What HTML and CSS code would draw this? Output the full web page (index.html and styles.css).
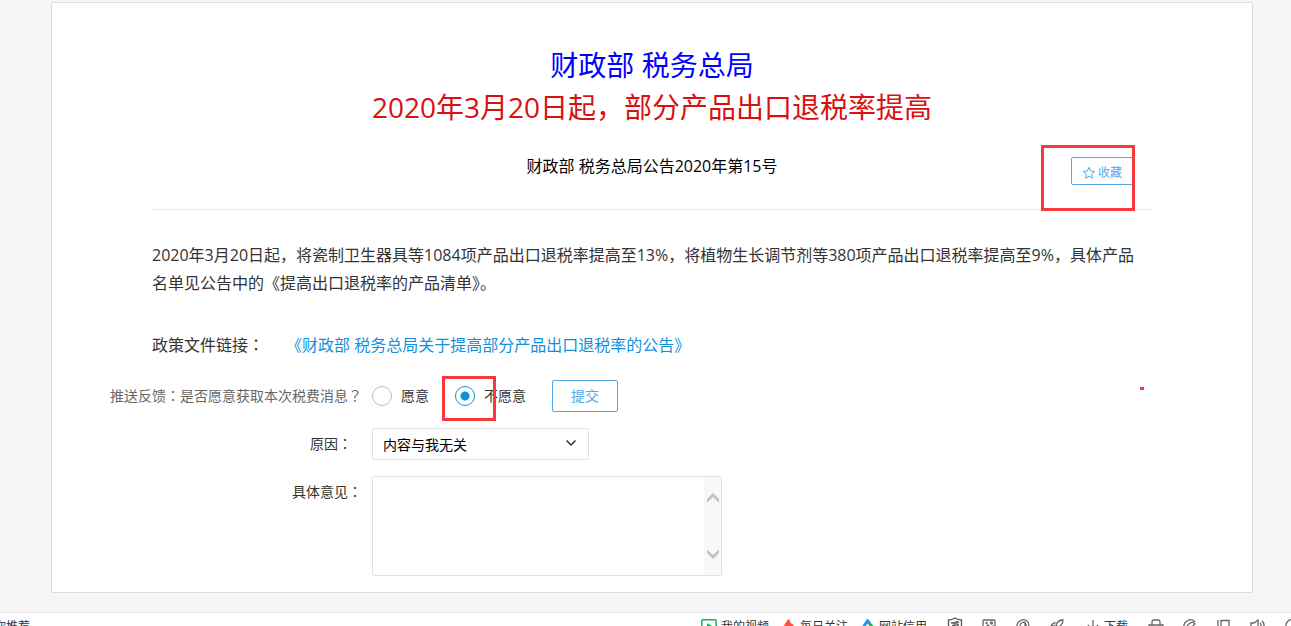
FILE: index.html
```html
<!DOCTYPE html>
<html lang="zh-CN">
<head>
<meta charset="utf-8">
<title>2020年3月20日起，部分产品出口退税率提高</title>
<link rel="stylesheet" href="styles.css">
</head>
<body>
<main class="card">
  <article class="article">
    <header class="article-head">
      <h1 class="title"><span class="title-org">财政部 税务总局</span><span class="title-main">2020年3月20日起，部分产品出口退税率提高</span></h1>
      <div class="subline">
        <p class="subtitle">财政部 税务总局公告2020年第15号</p>
        <div class="fav-wrap">
          <button class="btn fav" type="button">
            <svg width="14" height="14" viewBox="0 0 14 14" fill="none" stroke="currentColor" stroke-linejoin="round"><path d="M7 1.3l1.7 3.7 4 .5-3 2.7.8 4L7 10.2l-3.500 2 .8-4-3-2.700 4-.5z"/></svg>收藏</button>
          <span class="mark mark-fav"></span>
        </div>
      </div>
    </header>
    <p class="summary">2020年3月20日起，将瓷制卫生器具等1084项产品出口退税率提高至13%，将植物生长调节剂等380项产品出口退税率提高至9%，具体产品名单见公告中的《提高出口退税率的产品清单》。</p>
    <p class="policy"><span>政策文件链接<span class="colon" lang="ja">：</span></span><a href="#">《财政部 税务总局关于提高部分产品出口退税率的公告》</a></p>
  </article>
  <form class="feedback">
    <span class="question" id="q">推送反馈<span class="colon" lang="ja">：</span>是否愿意获取本次税费消息<span class="colon" lang="ja">？</span></span>
    <div class="answers" role="radiogroup" aria-labelledby="q">
      <label class="choice"><input type="radio" name="want" value="yes">愿意</label>
      <label class="choice"><input type="radio" name="want" value="no" checked>不愿意<span class="mark mark-radio"></span></label>
      <button class="btn submit" type="button">提交</button>
    </div>
    <label class="reason-label" for="reason">原因<span class="colon" lang="ja">：</span></label>
    <div class="select-wrap">
      <select id="reason"><option>内容与我无关</option></select>
      <svg class="caret" width="12" height="8" viewBox="0 0 12 8" fill="none" stroke="#333" stroke-width="1.500"><path d="M1.500 1.500L6 6l4.500-4.500"/></svg>
    </div>
    <label class="opinion-label" for="opinion">具体意见<span class="colon" lang="ja">：</span></label>
    <div class="opinion">
      <textarea id="opinion"></textarea>
      <div class="rail">
        <svg width="12" height="10" viewBox="0 0 12 10"><path d="M0 6l6-6 6 6v3.500L6 4 0 9.500z" fill="#c1c1c1"/></svg>
        <svg width="12" height="10" viewBox="0 0 12 10"><path d="M0 4l6 6 6-6V.5L6 6 0 .5z" fill="#c1c1c1"/></svg>
      </div>
    </div>
  </form>
  <span class="speck"></span>
</main>
<footer class="statusbar">
  <span class="recommend">为你推荐</span>
  <nav class="tools">
    <a class="tool named" href="#"><svg width="16" height="14" viewBox="0 0 16 14" fill="none" stroke="#1aaf5d" stroke-width="1.500"><rect x=".8" y=".8" width="14.400" height="12.400" rx="1"/><path d="M6 4l5 3-5 3z" fill="#1aaf5d" stroke="none"/></svg>我的视频</a>
    <a class="tool named focus" href="#"><svg width="14" height="14" viewBox="0 0 14 14"><path d="M1 8L5.500 1q1-1.500 2 0l1.500 4 1-1 3 5v5H1z" fill="#fa5147"/></svg>每日关注</a>
    <a class="tool named credit" href="#"><svg width="14" height="14" viewBox="0 0 14 14" fill="none" stroke-width="3"><path d="M6 1.500L13 10" stroke="#20b95b"/><path d="M1 10l5.500-8 2 2" stroke="#2196f3"/></svg>网站信用</a>
    <a class="tool" href="#" aria-label="安全"><svg width="16" height="16" viewBox="0 0 16 16" fill="none" stroke="#555" stroke-width="1.300"><path d="M8 1q3 2 6.500 2v5q0 5-6.500 7-6.500-2-6.500-7V3Q5 3 8 1z"/><path d="M4 6h3l2-1h3M5 8.500h3V6M10 5v3h2"/></svg></a>
    <a class="tool" href="#" aria-label="截图"><svg width="16" height="16" viewBox="0 0 16 16" fill="none" stroke="#666" stroke-width="1.300"><rect x="2" y="3" width="12" height="11" rx="1"/><path d="M3 12l4-4 3 3 2-2 2 2"/><circle cx="5.500" cy="6" r=".5"/><circle cx="10.500" cy="6" r="1"/></svg></a>
    <a class="tool" href="#" aria-label="浏览"><svg width="16" height="16" viewBox="0 0 16 16" fill="none" stroke="#666" stroke-width="1.200"><path d="M3 13Q0 7 5 4q5-3 8 1 2 4-1 8"/><path d="M5 10q0-5 5-5v7M8 5q4 1 3 6"/></svg></a>
    <a class="tool" href="#" aria-label="加速"><svg width="16" height="16" viewBox="0 0 16 16" fill="none" stroke="#666" stroke-width="1.300"><path d="M14 3Q9 3 7 8l2 2q5-2 5-7zM7 6Q4 5 2 9h4M9 10l1 4"/></svg></a>
    <a class="tool named download" href="#"><svg width="14" height="14" viewBox="0 0 14 14" fill="none" stroke="#666" stroke-width="1.300"><path d="M7 1v11M2 6l5 6 5-6"/></svg>下载</a>
    <a class="tool" href="#" aria-label="打印"><svg width="16" height="16" viewBox="0 0 16 16" fill="none" stroke="#666" stroke-width="1.300"><path d="M4 8V5q0-2 2-2h4q2 0 2 2v3M1 8h14v5H1z"/></svg></a>
    <a class="tool" href="#" aria-label="清理"><svg width="16" height="16" viewBox="0 0 16 16" fill="none" stroke="#666" stroke-width="1.200"><path d="M3 13Q0 7 5 4q5-3 8 1M4 11q2-5 7-6l2 2-7 6"/></svg></a>
    <a class="tool" href="#" aria-label="窗口"><svg width="16" height="16" viewBox="0 0 16 16" fill="none" stroke="#666" stroke-width="1.300"><path d="M5 3.500h8v9H5zM2 3v8"/></svg></a>
    <a class="tool" href="#" aria-label="声音"><svg width="16" height="16" viewBox="0 0 16 16" fill="none" stroke="#666" stroke-width="1.300"><path d="M1 6h3l4-3v11l-4-3H1zM10 6q2 2 0 5M12 4q4 4 0 9"/></svg></a>
    <a class="tool" href="#" aria-label="缩放"><svg width="16" height="16" viewBox="0 0 16 16" fill="none" stroke="#666" stroke-width="1.300"><circle cx="8" cy="8.500" r="6"/></svg></a>
  </nav>
</footer>
</body>
</html>
```
FILE: styles.css
```css
* { box-sizing: border-box; }

body {
  margin: 0;
  height: 100vh;
  overflow: hidden;
  background: #f5f5f5;
  color: #333;
  font: 14px/20px "Open Sans", "Noto Sans CJK SC", sans-serif;
}

h1, p { margin: 0; font-weight: 400; }
a { text-decoration: none; }
button, select, textarea { font: inherit; }

/* full-width punctuation centred in its em box */
.colon {
  font-family: "Noto Sans CJK JP", sans-serif;
  line-height: 1;
}

.card {
  position: relative;
  margin: 2px 38px 0 51px;
  padding-bottom: 16px;
  background: #fff;
  border: 1px solid #ddd;
}

.article { padding: 41px 100px 0; }

.article-head {
  padding-bottom: 24px;
  border-bottom: 1px solid #e8e8e8;
}

.title {
  font-size: 28px;
  line-height: 42px;
  text-align: center;
}
.title span { display: block; }
.title-org { color: #00f; }
.title-main { color: #d91010; }

.subline {
  display: grid;
  grid-template-columns: 1fr auto 1fr;
  align-items: start;
  margin-top: 28px;
}
.subtitle {
  grid-column: 2;
  color: #000;
  font-size: 16px;
}

.fav-wrap {
  position: relative;
  justify-self: end;
  margin: 1px 19px 0 0;
}

.btn {
  display: flex;
  align-items: center;
  justify-content: center;
  padding: 0;
  background: #fff;
  border: 1px solid #53a8ea;
  border-radius: 2px;
  color: #53a8ea;
}
.fav {
  gap: 2px;
  width: 62px;
  height: 28px;
  padding-top: 3px;
  font-size: 12px;
}
.submit {
  width: 66px;
  height: 32px;
}

.mark {
  position: absolute;
  border: 3px solid #f8383b;
  pointer-events: none;
}
.mark-fav { inset: -12px -2px -26px -30px; }
.mark-radio {
  left: -13px;
  top: -10px;
  width: 54px;
  height: 45px;
}
.speck {
  position: absolute;
  right: 108px;
  top: 384px;
  width: 4px;
  height: 3px;
  background: #f8383b;
}

.summary {
  margin-top: 31px;
  padding-right: 8px;
  font-size: 16px;
  line-height: 28px;
}
.policy {
  display: flex;
  gap: 22px;
  margin-top: 34px;
  font-size: 16px;
  line-height: 28px;
}
.policy a { color: #1191dd; }

.feedback {
  display: grid;
  grid-template-columns: 310px 1fr;
  grid-template-rows: 32px 32px auto;
  gap: 16px 10px;
  margin-top: 21px;
}
.question, .reason-label, .opinion-label {
  justify-self: end;
  line-height: 32px;
}
.question { color: #666; }
.reason-label { padding-right: 10px; }

.answers {
  display: flex;
  align-items: center;
  gap: 26px;
}
.choice {
  position: relative;
  display: flex;
  align-items: center;
  gap: 9px;
}
.choice input {
  appearance: none;
  width: 20px;
  height: 20px;
  margin: 0;
  background: #fff;
  border: 1px solid #bbb;
  border-radius: 50%;
}
.choice input:checked {
  border-color: #1191dd;
  background: radial-gradient(circle, #1191dd 4px, #fff 5px);
}

.select-wrap {
  position: relative;
  width: 217px;
}
.select-wrap select {
  display: block;
  appearance: none;
  width: 100%;
  height: 32px;
  padding: 2px 30px 0 10px;
  background: #fff;
  border: 1px solid #e2e2e2;
  border-radius: 2px;
  color: #000;
}
.caret {
  position: absolute;
  right: 12px;
  top: 11px;
  pointer-events: none;
}

.opinion {
  display: flex;
  width: 350px;
  height: 100px;
  border: 1px solid #e2e2e2;
  border-radius: 2px;
}
.opinion textarea {
  flex: 1;
  padding: 6px 10px;
  border: 0;
  resize: none;
}
.rail {
  display: flex;
  flex-direction: column;
  align-items: center;
  justify-content: space-between;
  width: 17px;
  padding: 16px 0;
  background: #f8f8f8;
}

.statusbar {
  display: flex;
  justify-content: space-between;
  margin-top: 19px;
  height: 28px;
  padding-top: 4px;
  background: #fff;
  border-top: 1px solid #e8e8e8;
  font-size: 12px;
  white-space: nowrap;
}
.recommend { margin-left: -18px; }
.tools {
  display: flex;
  gap: 18px;
  margin-right: -9px;
}
.tool {
  display: flex;
  align-items: flex-start;
  gap: 4px;
  height: 20px;
  color: #333;
}
.named svg { margin-top: 2px; }
.focus, .credit { margin-left: -5px; }
.credit { margin-right: 2px; }
.download { margin: 0 2px 0 3px; }
```
